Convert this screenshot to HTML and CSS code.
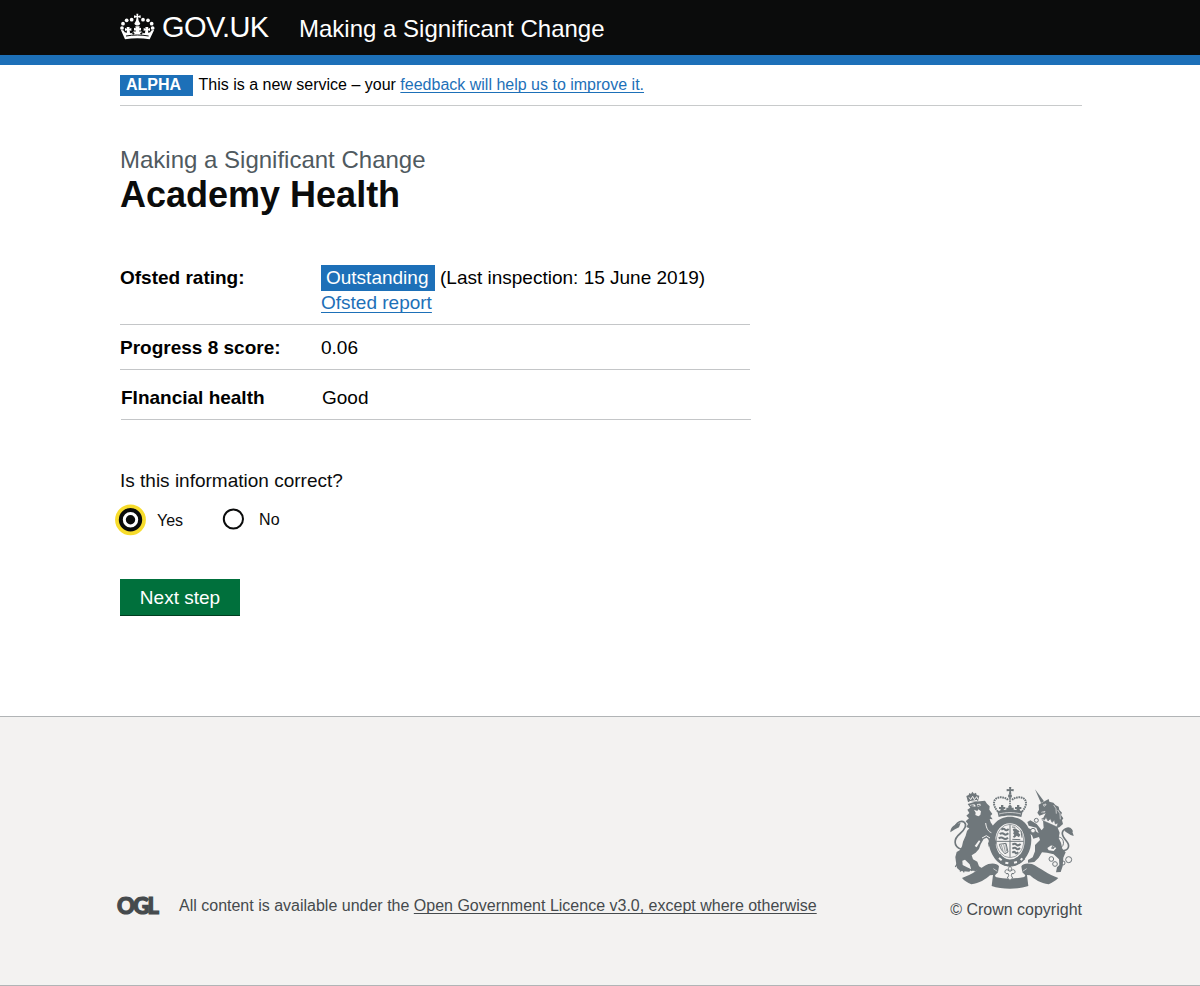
FILE: index.html
```html
<!DOCTYPE html>
<html lang="en">
<head>
<meta charset="utf-8">
<title>Academy Health - Making a Significant Change</title>
<link rel="stylesheet" href="styles.css">
</head>
<body>
<header class="header">
  <a class="brand">
    <svg class="brand-crown" viewBox="27 36 111 84" fill="#fff">
      <circle cx="36" cy="84" r="5.6"/><circle cx="39" cy="71" r="5.6"/><circle cx="50" cy="61" r="5.6"/><circle cx="65" cy="59" r="5.6"/>
      <circle cx="128" cy="84" r="5.6"/><circle cx="125" cy="71" r="5.6"/><circle cx="114" cy="61" r="5.6"/><circle cx="99" cy="59" r="5.6"/>
      <path d="M79 41h6l-1 7 8-2v8l-8-2 2 10 5 9c-3 7-15 7-18 0l5-9 2-10-8 2v-8l8 2z"/>
      <path d="M33 91c5-2 9 1 11 6l7 1-1-7-5 2v-9l6 2-1-5h9l-1 5 6-2v9l-5-2 1 8c5 2 9 0 11-5l6 1-1-5-4 2v-9l5 2-1-6h13l-1 6 5-2v9l-4-2-1 5 6-1c2 5 6 7 11 5l1-8-5 2v-9l6 2-1-5h9l-1 5 6-2v9l-5-2-1 7 7-1c2-5 6-8 11-6l-13 27c-25-4-49-4-74 0z"/>
      <path d="M48 108c23-4 45-4 68 0" fill="none" stroke="#0b0c0c" stroke-width="3"/>
      <path d="M66 101l4-5 4 5-4 3zM90 101l4-5 4 5-4 3z" fill="#0b0c0c"/>
    </svg>
    <span class="brand-name">GOV.UK</span>
  </a>
  <span class="service-name">Making a Significant Change</span>
</header>

<main class="main">
  <div class="phase">
    <strong class="phase-tag">ALPHA</strong>
    <span>This is a new service – your <a class="link">feedback will help us to improve it.</a></span>
  </div>

  <p class="caption">Making a Significant Change</p>
  <h1 class="title">Academy Health</h1>

  <dl class="summary">
    <div class="row">
      <dt>Ofsted rating:</dt>
      <dd><span class="rating">Outstanding</span><span class="inspection">(Last inspection: 15 June 2019)</span><br><a class="link report">Ofsted report</a></dd>
    </div>
    <div class="row">
      <dt>Progress 8 score:</dt>
      <dd>0.06</dd>
    </div>
    <div class="row row-last">
      <dt>FInancial health</dt>
      <dd>Good</dd>
    </div>
  </dl>

  <p class="question">Is this information correct?</p>
  <div class="radios">
    <label class="radio radio-yes">
      <svg width="32" height="32" viewBox="0 0 32 32"><circle cx="16.5" cy="15.8" r="15.4" fill="#f7dc2c"/><circle cx="16.5" cy="15.8" r="9.7" fill="#fff" stroke="#0b0c0c" stroke-width="4"/><circle cx="16.5" cy="15.8" r="4.7" fill="#0b0c0c"/></svg>
      <span>Yes</span>
    </label>
    <label class="radio radio-no">
      <svg width="22" height="22" viewBox="0 0 22 22"><circle cx="11.4" cy="11" r="9.6" fill="#fff" stroke="#0b0c0c" stroke-width="2"/></svg>
      <span>No</span>
    </label>
  </div>
  <button class="button">Next step</button>
</main>

<footer class="footer">
  <div class="licence">
    <span class="ogl">OGL</span>
    <span>All content is available under the <a class="footer-link">Open Government Licence v3.0, except where otherwise</a></span>
  </div>
  <div class="copyright">
    <svg class="crest" viewBox="0 0 402 330" fill="#6f777b">
      <!-- central crown -->
      <path d="M192 12h7l-1 7 8-1v7l-8-1 1 9h-7l1-9-8 1v-7l8 1z"/>
      <circle cx="195" cy="39" r="6"/>
      <path d="M159 86c-17-19-15-37 0-42 13-3 26 1 31 8M231 86c17-19 15-37 0-42-13-3-26 1-31 8" fill="none" stroke="#6f777b" stroke-width="6" stroke-dasharray="5 2"/>
      <path d="M195 45v36" stroke="#6f777b" stroke-width="5" stroke-dasharray="5 2"/>
      <path d="M168 66h7v6h6v6h-5l2 8h-13l2-8h-5v-6h6zM216 66h7v6h6v6h-5l2 8h-13l2-8h-5v-6h6zM190 68h10v6h6v7h-5l2 5h-16l2-5h-5v-7h6z"/>
      <path d="M157 85c25-7 51-7 76 0l-4 17c-22-6-46-6-68 0z"/>
      <path d="M162 93c22-6 44-6 66 0" fill="none" stroke="#f3f2f1" stroke-width="2"/>
      <!-- garter and shield -->
      <path fill-rule="evenodd" d="M195 101c37 0 64 30 64 70s-27 79-64 79-64-39-64-79 27-70 64-70zm0 20c-26 0-44 23-44 52s18 58 44 58 44-29 44-58-18-52-44-52z"/>
      <ellipse cx="195" cy="174" rx="41" ry="50" fill="none" stroke="#6f777b" stroke-width="2"/>
      <path d="M195 125v97M154 175h82" stroke="#6f777b" stroke-width="3"/>
      <path d="M169 140q7-5 11 0t11-2M164 153q8-5 13 0t13-2M161 166q8-5 14 0t14-2M202 185q8-5 12 0t13-2M202 197q8-5 12 0t11-2M202 209q6-5 9 0t8-2" fill="none" stroke="#6f777b" stroke-width="6"/>
      <path d="M203 140c4-6 11-3 14 0l7 5-4 4 6 6-4 8-7-5-6 6-6-2 5-6-4-5 3-4z"/>
      <path d="M201 132l10 1M228 143l3 21M202 169l24 1" stroke="#6f777b" stroke-width="3"/>
      <path d="M163 184l20-3 6 26-9 5c-8-7-14-15-17-28z" fill="none" stroke="#6f777b" stroke-width="3"/>
      <path d="M169 186l5 17m2-19l5 24m1-25l3 22" stroke="#6f777b" stroke-width="2"/>
      <path d="M157 218c17 25 51 32 76 3" fill="none" stroke="#6f777b" stroke-width="21"/>
      <path d="M162 225l8 7M181 239l9 2M207 239l9-2M227 231l5-5" stroke="#f3f2f1" stroke-width="6"/>
      <!-- lion -->
      <path d="M69 57l-5-18 7-3 2-6 5 3 4-7 5 6 6-3 2 7 8 2-4 17z"/>
      <path d="M72 43l5 7 6-10 5 10 7-9 4 8M73 56l24-4" fill="none" stroke="#f3f2f1" stroke-width="3"/>
      <path d="M68 63L90 56L120 53L126 62L134 70L133 80L142 93L136 99L143 109L134 108L137 118L148 134L141 148L148 160L154 178L150 190L139 187L131 191L129 180L135 174L125 164L116 168L107 184L102 198L92 209L80 217L84 229L97 236L102 250L111 256L109 264L80 263L74 244L60 230L52 233L53 246L66 253L79 259L73 266L46 264L36 255L33 238L31 222L35 207L45 201L51 190L54 176L62 158L66 144L73 136L64 132L69 123L62 115L72 106L64 98L73 90L67 80L76 74Z"/>
      <path d="M74 66l14-2 5 6-11 2zM96 63l10-1 1 6-9 3zM87 80l5 9-1 7 9 4 6-4 2-11-8-6-3 5zM89 189l13-17 4 3-11 18z" fill="#f3f2f1"/>
      <path d="M78 69h8M98 67h6" stroke="#6f777b" stroke-width="4"/>
      <path d="M122 120c2 18 9 26 17 29M111 165l13-7 11 7" fill="none" stroke="#f3f2f1" stroke-width="3"/>
      <path d="M49 199C23 190 27 167 44 153c17-14 22-28 14-35-9-7-20 0-26 9" fill="none" stroke="#6f777b" stroke-width="5"/>
      <path d="M16 148c0-17 13-24 31-29l-5 14-12 6z"/>
      <path d="M37 242l-6 10M49 255l-3 11M57 256l-1 12M83 252l-5 12M93 255l-3 11" stroke="#6f777b" stroke-width="4"/>
      <!-- unicorn -->
      <path d="M270 19l27 36-9 5z"/>
      <path d="M281 65L291 59L300 54L311 48L313 56L325 59L332 67L341 71L343 81L351 89L348 96L355 106L351 112L354 123L343 133L333 136L293 108L302 91L295 94L283 98L277 89L282 80Z"/>
      <path d="M295 65l8-2-1 4-5 3zM289 88l11-3-5 6M326 66l7 11 1 15m4-11l7 11 1 17" fill="none" stroke="#f3f2f1" stroke-width="2"/>
      <path d="M294 112L337 132L344 149L341 165L348 179L352 197L362 208L355 224L353 250L347 267L333 268L336 253L343 246L342 229L326 214L306 209L291 208L281 224L268 237L249 239L249 231L263 223L270 205L270 186L285 171L282 162L265 167L261 157L246 146L250 136L267 141L281 151L274 134L251 128L247 117L256 112L275 123L290 142L296 134Z"/>
      <path d="M291 105l7 6 5-8 6 11 7-7 5 11 7-6 3 11 8-3-3 12-44-20z" fill="#f3f2f1" stroke="#6f777b" stroke-width="2"/>
      <path d="M307 195l13-9 14 9-8 9-15-2zM325 220l9 9-1 11-5-5z" fill="#f3f2f1"/>
      <path d="M319 195h8" stroke="#6f777b" stroke-width="5"/>
      <path d="M351 204c21-2 25-16 13-30-16-18-16-31-1-37 9-4 16 0 19 9" fill="none" stroke="#6f777b" stroke-width="5"/>
      <path d="M359 137c13-6 24 5 27 22-13-3-21-11-27-15z"/>
      <path d="M338 163c17-5 25 25 8 31" fill="none" stroke="#6f777b" stroke-width="3"/>
      <g fill="none" stroke="#6f777b" stroke-width="3">
        <circle cx="264" cy="143" r="7" fill="#f3f2f1"/><circle cx="274" cy="112" r="6"/><circle cx="319" cy="228" r="7"/><circle cx="330" cy="243" r="7"/><circle cx="354" cy="240" r="6"/><circle cx="371" cy="230" r="9"/><circle cx="327" cy="187" r="6"/>
      </g>
      <!-- ribbon and motto -->
      <path d="M51 285C81 275 105 255 130 243C143 240 157 241 162 250L159 268L150 277L152 282C180 288 210 288 238 282L241 277L232 268L229 250C234 241 248 240 261 243C286 255 310 275 340 285C331 293 322 299 311 304C287 301 268 289 255 277L246 276L250 309C220 320 170 320 140 309L144 276L135 277C122 289 103 301 79 304C67 299 58 293 51 285Z"/>
      <path d="M145 257l12 8M245 257l-12 8" fill="none" stroke="#f3f2f1" stroke-width="2"/>
      <path d="M190 256l5-7 5 7-3 9c5-7 13-6 13 1 0 5-5 8-9 5l-2 7 4 7-8 7-8-7 4-7-2-7c-4 3-9 0-9-5 0-7 8-8 13-1z" fill="#f3f2f1" stroke="#6f777b" stroke-width="3"/>
    </svg>
    <span>© Crown copyright</span>
  </div>
</footer>
</body>
</html>
```

FILE: styles.css
```css
* { box-sizing: border-box; }
body { margin: 0; height: 986px; display: flex; flex-direction: column; background: #fff; color: #0b0c0c; font: 16px/20px "Liberation Sans", Arial, sans-serif; }
p, h1, dl, dd { margin: 0; }

.header { height: 65px; padding-left: 119px; display: flex; align-items: flex-start; background: #0b0c0c; border-bottom: 10px solid #1d70b8; color: #fff; }
.brand { display: flex; width: 180px; }
.brand-crown { width: 37px; height: 28px; margin-top: 12px; }
.brand-name { margin: 12px 0 0 6px; font-size: 29px; line-height: 30px; letter-spacing: -0.6px; }
.service-name { margin-top: 14px; font-size: 24px; line-height: 30px; }

.main { flex: 1; padding-left: 120px; }
.phase { width: 962px; height: 41px; padding-top: 10px; display: flex; gap: 5.5px; border-bottom: 1px solid #c8cacb; color: #000; }
.phase-tag { width: 73px; height: 21px; padding-left: 6px; background: #1d70b8; color: #fff; }
.link { color: #1d70b8; text-decoration: underline; text-decoration-thickness: 1px; text-underline-offset: 2px; text-decoration-skip-ink: none; }
.report { text-underline-offset: 3px; }
.caption { margin-top: 39px; font-size: 24px; line-height: 30px; color: #505a5f; }
.title { font-size: 36px; line-height: 40px; }

.summary { width: 630px; margin-top: 50px; font-size: 19px; line-height: 25px; color: #000; }
.row { display: grid; grid-template-columns: 201px 1fr; padding-bottom: 9px; border-bottom: 1px solid #c4c6c8; }
.row + .row { padding-top: 10px; }
.row.row-last { padding-top: 15px; margin: 0 -1px 0 1px; }
dt { font-weight: 700; }
.rating { display: inline-block; height: 26px; margin-bottom: -1px; padding: 0 5px; width: 114px; background: #1d70b8; color: #fff; vertical-align: top; }
.inspection { margin-left: 5px; }

.question { margin-top: 48px; font-size: 19px; line-height: 25px; }
.radios { display: flex; align-items: flex-start; height: 38px; margin: 10px 0 0 -6px; }
.radio { display: flex; align-items: center; }
.radio span { padding-top: 2px; }
.radio-yes { gap: 11px; margin-top: 1px; }
.radio-no { gap: 15px; margin: 5px 0 0 39px; }
.button { display: block; width: 120px; height: 37px; margin-top: 38px; padding: 0; border: 0; border-bottom: 1px solid #003d20; background: #00703c; color: #fff; font: 19px/25px "Liberation Sans", Arial, sans-serif; }

.footer { height: 270px; padding: 66px 118px 0 117px; display: flex; justify-content: space-between; background: #f3f2f1; border-top: 1px solid #b1b4b6; border-bottom: 1px solid #b1b4b6; color: #454a4d; }
.licence { display: flex; margin-top: 113px; }
.ogl { width: 62px; height: 24px; margin-top: -2px; font: 900 22px/24px Lato, sans-serif; letter-spacing: -1.6px; -webkit-text-stroke: 1.2px #454a4d; }
.footer-link { text-decoration: underline; text-decoration-thickness: 1px; text-underline-offset: 2px; text-decoration-skip-ink: none; }
.copyright { display: flex; flex-direction: column; gap: 7px; }
.crest { width: 134px; height: 110px; margin-left: -5px; }
```
